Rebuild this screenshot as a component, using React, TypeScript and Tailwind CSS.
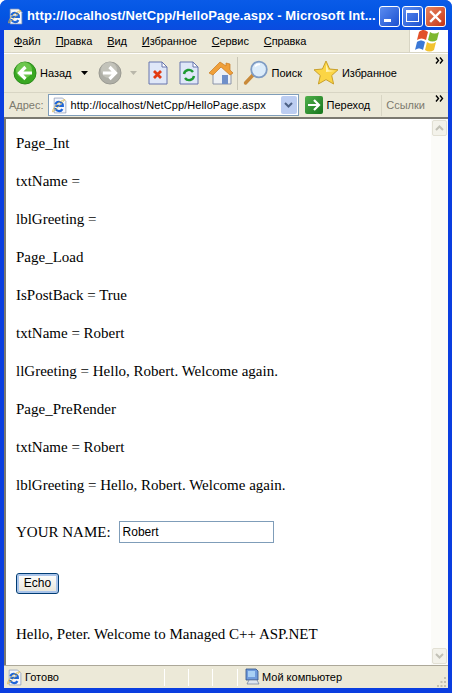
import React from 'react';

const IeGlyph = () => (
  <>
    <path d="M4 8.4h7.2a3.7 3.7 0 0 0-7.1-1.6M4 10.4a3.7 3.7 0 0 0 6.8 1" fill="none" stroke="#1f66d8" strokeWidth="2" />
    <path d="M1.5 14C1 11 7 4 13 2.4 11 5 6 11 1.5 14z" fill="none" stroke="#e3b93f" strokeWidth="0.7" />
  </>
);

const IeIcon = () => (
  <svg width={17} height={17} viewBox="0 0 16 16" className="shrink-0">
    <path d="M3 1h8l3 3v11H3z" fill="#f6f7fb" stroke="#8a9ab8" strokeWidth="0.7" />
    <IeGlyph />
  </svg>
);

const WindowButton = ({ kind }: { kind: 'min' | 'max' | 'close' }) => (
  <div
    className={`w-[21px] h-[21px] rounded-[3px] border border-white flex items-center justify-center ${
      kind === 'close'
        ? 'bg-gradient-to-br from-[#e8835f] to-[#c5320f]'
        : 'bg-gradient-to-br from-[#5b8cf0] to-[#1c4fd0]'
    }`}
  >
    {kind === 'min' && <div className="w-[7px] h-[3px] bg-white mt-[9px] mr-[4px]" />}
    {kind === 'max' && <div className="w-[13px] h-[12px] border border-white border-t-[3px]" />}
    {kind === 'close' && (
      <svg width="13" height="13" viewBox="0 0 13 13">
        <path d="M2 2l9 9M11 2l-9 9" stroke="white" strokeWidth="2.4" strokeLinecap="square" />
      </svg>
    )}
  </div>
);

const Underlined = ({ first, rest }: { first: string; rest: string }) => (
  <span>
    <span className="underline">{first}</span>
    {rest}
  </span>
);

const RoundArrow = ({ active }: { active: boolean }) => (
  <svg width="24" height="24" viewBox="0 0 24 24" className="shrink-0">
    <circle cx="12" cy="12" r="11" fill={active ? '#3aa822' : '#aeaea6'} stroke={active ? '#2a8a1a' : '#9a9a92'} />
    <circle cx="11" cy="9" r="8" fill={active ? '#8fdc6a' : '#d0d0c8'} opacity="0.6" />
    {active ? (
      <path d="M19 12H7M12.5 6L6.5 12l6 6" fill="none" stroke="white" strokeWidth="3.2" />
    ) : (
      <path d="M5 12h12M11.5 6l6 6-6 6" fill="none" stroke="white" strokeWidth="3.2" />
    )}
  </svg>
);

const PageIcon = ({ children }: { children: React.ReactNode }) => (
  <svg width="20" height="24" viewBox="0 0 20 24" className="shrink-0">
    <path d="M1 1h13l5 5v17H1z" fill="#dfe7f8" stroke="#6675ad" />
    <path d="M14 1v5h5z" fill="#fff" stroke="#6675ad" />
    {children}
  </svg>
);

const HomeIcon = () => (
  <svg width="26" height="26" viewBox="0 0 26 26" className="shrink-0">
    <path d="M5 13l9-7 9 7v11H5z" fill="#eef1f5" stroke="#8a93a8" />
    <path d="M14 15h6v9h-6z" fill="#6f8fc9" />
    <path d="M1 13L12 2l6 4V3l4 1v6l3 3-3 2-9-8-8 8z" fill="#f0a03a" stroke="#c97a20" strokeWidth="0.7" />
  </svg>
);

const SearchIcon = () => (
  <svg width="26" height="26" viewBox="0 0 26 26" className="shrink-0">
    <path d="M10 15L2.5 23" stroke="#c98a3a" strokeWidth="3.4" strokeLinecap="round" />
    <circle cx="16" cy="9.5" r="7.8" fill="#dcecfa" stroke="#7f9cc4" strokeWidth="1.8" />
    <path d="M12 6.5a5 5 0 0 1 5-2" fill="none" stroke="white" strokeWidth="1.6" />
  </svg>
);

const StarIcon = () => (
  <svg width="26" height="26" viewBox="0 0 26 26" className="shrink-0">
    <path
      d="M13 1l3.6 8 8.4.8-6.3 5.7 1.9 8.5L13 19.6 5.4 24l1.9-8.5L1 9.8 9.4 9z"
      fill="#fbd545"
      stroke="#c9a02c"
    />
    <path d="M13 4l2.6 6.3 6.3.6L13 12z" fill="#fff3b0" />
  </svg>
);

const GoIcon = () => (
  <div className="w-[18px] h-[18px] rounded-[2px] bg-gradient-to-br from-[#4fb04a] to-[#14761c] flex items-center justify-center shrink-0">
    <svg width="14" height="14" viewBox="0 0 14 14">
      <path d="M1 7h10M7 2l5 5-5 5" fill="none" stroke="white" strokeWidth="2.2" />
    </svg>
  </div>
);

const XpLogo = () => (
  <svg width="32" height="24" viewBox="0 0 32 24">
    <path d="M6 3c4-3 6-2 9 0l-2 8c-3-2-6-2-9 0z" fill="#e2512a" />
    <path d="M17 3c3 2 6 2 9 0l-2 8c-3 2-6 2-9 0z" fill="#7eb82f" />
    <path d="M4 13c3-2 5-2 8 0l-2 8c-3-2-5-2-8 0z" fill="#3b78d6" />
    <path d="M14 13c3 2 6 2 9 0l-2 8c-3 2-6 2-9 0z" fill="#f2c230" />
  </svg>
);

const Chevrons = () => (
  <svg width="9" height="7" viewBox="0 0 9 7">
    <path d="M1 0.5L3.5 3.5 1 6.5M5 0.5L7.5 3.5 5 6.5" fill="none" stroke="black" strokeWidth="1.4" />
  </svg>
);

const Caret = ({ color = '#000' }: { color?: string }) => (
  <svg width="7" height="4" viewBox="0 0 7 4" className="shrink-0">
    <path d="M0 0h7L3.5 4z" fill={color} />
  </svg>
);

const ScrollButton = ({ up }: { up: boolean }) => (
  <div className="w-[15px] h-[16px] rounded-[2px] bg-[#f3f2ea] border border-[#e2e0d4] flex items-center justify-center shrink-0">
    <svg width="9" height="6" viewBox="0 0 9 6">
      <path d={up ? 'M1 5l3.5-3.5L8 5' : 'M1 1l3.5 3.5L8 1'} fill="none" stroke="#c2c1b6" strokeWidth="2" />
    </svg>
  </div>
);

const ComputerIcon = () => (
  <svg width="16" height="18" viewBox="0 0 16 18" className="shrink-0">
    <path d="M2 1h10l2 2v9H2z" fill="#6f9bdc" stroke="#2f4f86" strokeWidth="0.8" />
    <path d="M4 3h7v6H4z" fill="#a8d0f5" />
    <path d="M5 12h8l2 4H3z" fill="#dfe6f0" stroke="#6a7a96" strokeWidth="0.7" />
  </svg>
);

const Grip = () => (
  <svg width="11" height="11" viewBox="0 0 11 11" className="shrink-0">
    <path d="M8 1h2v2H8zM4.500 5h2v2h-2zM8 5h2v2H8zM1 9h2v2H1zM4.500 9h2v2h-2zM8 9h2v2H8z" fill="#c4c1b0" />
  </svg>
);

const lines = [
  'Page_Int',
  'txtName =',
  'lblGreeting =',
  'Page_Load',
  'IsPostBack = True',
  'txtName = Robert',
  'llGreeting = Hello, Robert. Welcome again.',
  'Page_PreRender',
  'txtName = Robert',
  'lblGreeting = Hello, Robert. Welcome again.',
];

export default function App() {
  return (
    <div className="w-[452px] h-[693px] flex flex-col overflow-hidden bg-[#0a3ee0] rounded-t-[7px] font-['Liberation_Sans',sans-serif] text-[11px] text-black">
      {/* title bar */}
      <div className="h-[30px] shrink-0 flex items-center pl-[7px] pr-[6px] pt-[2px] bg-gradient-to-b from-[#0a5be8] via-[#0355e3] to-[#0a4be0] text-white">
        <IeIcon />
        <span className="ml-[3px] flex-1 min-w-0 font-bold text-[13px] tracking-[0.1px] whitespace-nowrap">
          http://localhost/NetCpp/HelloPage.aspx - Microsoft Int...
        </span>
        <div className="flex gap-[2px]">
          <WindowButton kind="min" />
          <WindowButton kind="max" />
          <WindowButton kind="close" />
        </div>
      </div>

      <div className="flex-1 min-h-0 mx-[4px] mb-[5px] flex flex-col bg-[#ece9d8]">
        {/* menu */}
        <div className="h-[23px] shrink-0 flex border-b border-[#d8d5c4]">
          <div className="flex-1 flex items-center gap-[15px] pl-[10px] tracking-[-0.1px]">
            <Underlined first="Ф" rest="айл" />
            <Underlined first="П" rest="равка" />
            <Underlined first="В" rest="ид" />
            <Underlined first="И" rest="збранное" />
            <Underlined first="С" rest="ервис" />
            <Underlined first="С" rest="правка" />
          </div>
          <div className="w-[39px] bg-white border-l border-[#d8d5c4] flex items-center justify-center">
            <XpLogo />
          </div>
        </div>

        {/* toolbar */}
        <div className="h-[40px] shrink-0 flex items-center pl-[9px] border-b border-[#d8d5c4] border-t border-t-white">
          <RoundArrow active />
          <span className="ml-[3px]">Назад</span>
          <span className="ml-[9px]"><Caret /></span>
          <span className="ml-[10px]"><RoundArrow active={false} /></span>
          <span className="ml-[8px]"><Caret color="#b9b7aa" /></span>
          <span className="ml-[11px]">
            <PageIcon>
              <path d="M6 10l7 7M13 10l-7 7" stroke="#e23a12" strokeWidth="2.8" />
            </PageIcon>
          </span>
          <span className="ml-[11px]">
            <PageIcon>
              <path d="M5 13a5 5 0 0 1 9-2M15 15a5 5 0 0 1-9 2" fill="none" stroke="#1e9a33" strokeWidth="2.4" />
            </PageIcon>
          </span>
          <span className="ml-[9px]"><HomeIcon /></span>
          <div className="ml-[3px] w-px h-[33px] bg-[#c9c6b6]" />
          <span className="ml-[5px]"><SearchIcon /></span>
          <span className="ml-[3px]">Поиск</span>
          <span className="ml-[11px]"><StarIcon /></span>
          <span className="ml-[3px] tracking-[-0.1px]">Избранное</span>
          <div className="flex-1 self-start flex justify-end pt-[3px] pr-[4px]"><Chevrons /></div>
        </div>

        {/* address bar */}
        <div className="h-[24px] shrink-0 flex items-center">
          <span className="ml-[5px] text-[#7c7a6e]">Адрес:</span>
          <div className="ml-[4px] w-[251px] h-[22px] bg-white border border-[#7f9db9] flex items-center pl-[2px]">
            <IeIcon />
            <span className="ml-[3px] flex-1 tracking-[0.1px]">http://localhost/NetCpp/HelloPage.aspx</span>
            <div className="w-[16px] h-[18px] mr-px rounded-[2px] bg-[#bccdf1] flex items-center justify-center">
              <svg width="9" height="6" viewBox="0 0 9 6">
                <path d="M1 1l3.5 3.5L8 1" fill="none" stroke="#4d6185" strokeWidth="2" />
              </svg>
            </div>
          </div>
          <div className="ml-[6px]"><GoIcon /></div>
          <span className="ml-[4px]">Переход</span>
          <div className="ml-[11px] w-px h-[21px] bg-[#d8d5c4]" />
          <span className="ml-[4px] text-[#7c7a6e]">Ссылки</span>
          <div className="flex-1 self-start flex justify-end pt-[2px] pr-[4px]"><Chevrons /></div>
        </div>

        {/* page */}
        <div className="flex-1 min-h-0 flex border-t-2 border-l-2 border-t-[#7b7970] border-l-[#7b7970] bg-white font-['Liberation_Serif',serif] text-[15px]">
          <div className="flex-1 min-w-0 pl-[10px] pt-[16px] flex flex-col">
            <div className="flex flex-col gap-[21px]">
              {lines.map((line, i) => (
                <p key={i} className="leading-[17px]">{line}</p>
              ))}
            </div>
            <div className="mt-[27px] flex items-center">
              <span>YOUR NAME:</span>
              <input
                readOnly
                value="Robert"
                className="ml-[8px] w-[155px] h-[22px] px-[3px] border border-[#7f9db9] font-['Liberation_Sans',sans-serif] text-[12px]"
              />
            </div>
            <button className="mt-[29px] self-start w-[43px] h-[21px] rounded-[3px] border border-[#003c74] bg-gradient-to-b from-white to-[#e6e4d8] font-['Liberation_Sans',sans-serif] text-[12px] shadow-[inset_0_0_0_2px_#a9c4ea]">
              Echo
            </button>
            <p className="mt-[32px] leading-[17px]">Hello, Peter. Welcome to Managed C++ ASP.NET</p>
          </div>
          <div className="w-[17px] shrink-0 bg-[#fbfbf8] flex flex-col justify-between items-center py-px">
            <ScrollButton up />
            <ScrollButton up={false} />
          </div>
        </div>

        {/* status bar */}
        <div className="h-[23px] shrink-0 flex items-center border-t border-[#aca899] bg-[#ece9d8]">
          <span className="ml-[2px]"><IeIcon /></span>
          <span className="ml-[2px] w-[139px]">Готово</span>
          <div className="w-px h-[17px] bg-white" />
          <div className="ml-[23px] w-px h-[17px] bg-white" />
          <div className="ml-[23px] w-px h-[17px] bg-white" />
          <div className="ml-[24px] w-px h-[17px] bg-white" />
          <span className="ml-[6px]"><ComputerIcon /></span>
          <span className="ml-[2px] flex-1">Мой компьютер</span>
          <span className="self-end mb-px mr-px"><Grip /></span>
        </div>
      </div>
    </div>
  );
}
